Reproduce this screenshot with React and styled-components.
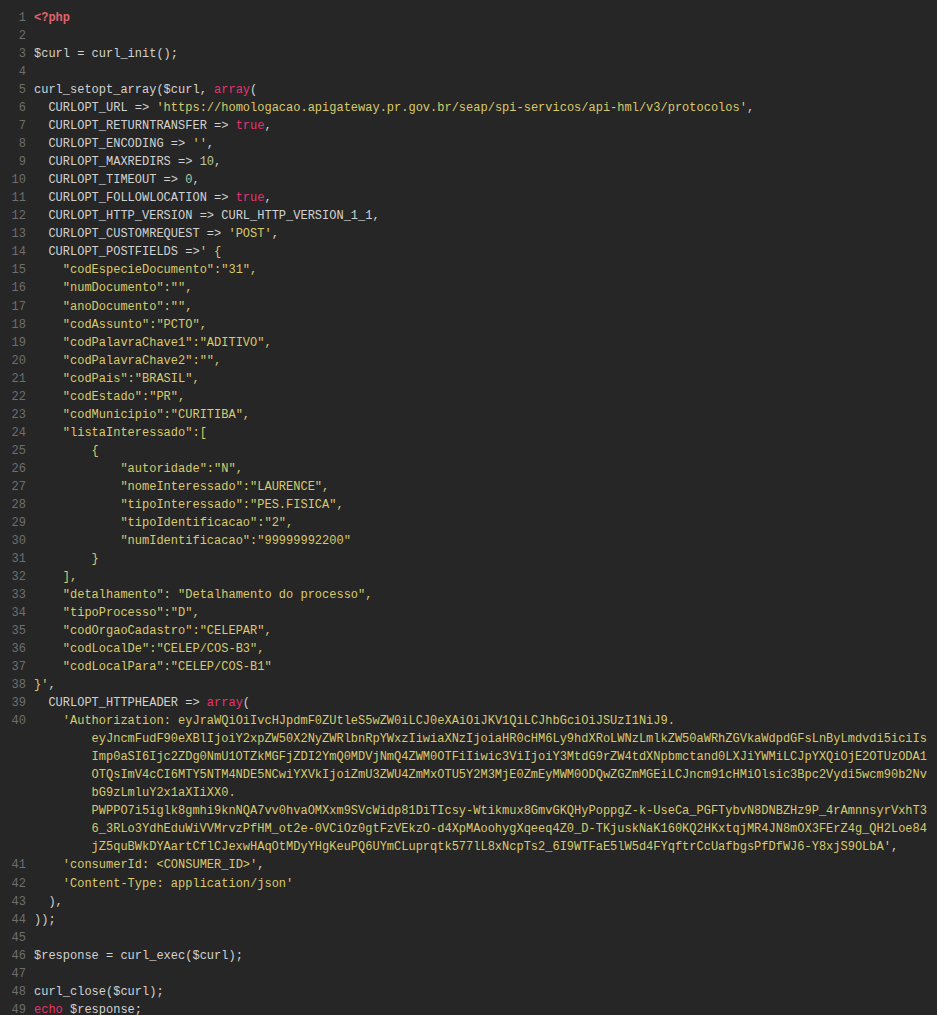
import React from "react";
import styled, { createGlobalStyle } from "styled-components";

const Global = createGlobalStyle`
  html, body {
    margin: 0;
    padding: 0;
    background: #262626;
  }
`;

const Editor = styled.div`
  display: grid;
  grid-template-columns: 26px 1fr;
  column-gap: 8px;
  padding: 9px 0 0 0;
  background: #262626;
  font-family: "Liberation Mono", "DejaVu Sans Mono", monospace;
  font-size: 12px;
  line-height: 18.03px;
  color: #d2d2d2;
  min-height: 1015px;
  box-sizing: border-box;
`;

const LineNo = styled.div`
  text-align: right;
  color: #6e6e6e;
  white-space: pre;
`;

const Code = styled.div`
  white-space: pre;
  min-height: 18px;
`;

const Wrap = styled.div`
  white-space: pre;
  padding-left: 57.6px;
`;

const colors = {
  d: "#d2d2d2",
  s: "#d9ca6c",
  k: "#e5336f",
  n: "#b3c9a2",
  t: "#e0626c",
};

const Tok = styled.span`
  color: ${(p) => colors[p.$t]};
  font-weight: ${(p) => (p.$t === "t" ? 700 : 400)};
`;

const S = (t) => ["s", t];
const D = (t) => ["d", t];
const K = (t) => ["k", t];
const N = (t) => ["n", t];

const lines = [
  [["t", "<?php"]],
  [],
  [D("$curl = curl_init();")],
  [],
  [D("curl_setopt_array($curl, "), K("array"), D("(")],
  [D("  CURLOPT_URL => "), S("'https://homologacao.apigateway.pr.gov.br/seap/spi-servicos/api-hml/v3/protocolos'"), D(",")],
  [D("  CURLOPT_RETURNTRANSFER => "), K("true"), D(",")],
  [D("  CURLOPT_ENCODING => "), S("''"), D(",")],
  [D("  CURLOPT_MAXREDIRS => "), N("10"), D(",")],
  [D("  CURLOPT_TIMEOUT => "), N("0"), D(",")],
  [D("  CURLOPT_FOLLOWLOCATION => "), K("true"), D(",")],
  [D("  CURLOPT_HTTP_VERSION => CURL_HTTP_VERSION_1_1,")],
  [D("  CURLOPT_CUSTOMREQUEST => "), S("'POST'"), D(",")],
  [D("  CURLOPT_POSTFIELDS =>"), S("' {")],
  [S('    "codEspecieDocumento":"31",')],
  [S('    "numDocumento":"",')],
  [S('    "anoDocumento":"",')],
  [S('    "codAssunto":"PCTO",')],
  [S('    "codPalavraChave1":"ADITIVO",')],
  [S('    "codPalavraChave2":"",')],
  [S('    "codPais":"BRASIL",')],
  [S('    "codEstado":"PR",')],
  [S('    "codMunicipio":"CURITIBA",')],
  [S('    "listaInteressado":[')],
  [S("        {")],
  [S('            "autoridade":"N",')],
  [S('            "nomeInteressado":"LAURENCE",')],
  [S('            "tipoInteressado":"PES.FISICA",')],
  [S('            "tipoIdentificacao":"2",')],
  [S('            "numIdentificacao":"99999992200"')],
  [S("        }")],
  [S("    ],")],
  [S('    "detalhamento": "Detalhamento do processo",')],
  [S('    "tipoProcesso":"D",')],
  [S('    "codOrgaoCadastro":"CELEPAR",')],
  [S('    "codLocalDe":"CELEP/COS-B3",')],
  [S('    "codLocalPara":"CELEP/COS-B1"')],
  [S("}'"), D(",")],
  [D("  CURLOPT_HTTPHEADER => "), K("array"), D("(")],
  {
    first: [D("    "), S("'Authorization: eyJraWQiOiIvcHJpdmF0ZUtleS5wZW0iLCJ0eXAiOiJKV1QiLCJhbGciOiJSUzI1NiJ9.")],
    wraps: [
      [S("eyJncmFudF90eXBlIjoiY2xpZW50X2NyZWRlbnRpYWxzIiwiaXNzIjoiaHR0cHM6Ly9hdXRoLWNzLmlkZW50aWRhZGVkaWdpdGFsLnByLmdvdi5iciIs")],
      [S("Imp0aSI6Ijc2ZDg0NmU1OTZkMGFjZDI2YmQ0MDVjNmQ4ZWM0OTFiIiwic3ViIjoiY3MtdG9rZW4tdXNpbmctand0LXJiYWMiLCJpYXQiOjE2OTUzODA1")],
      [S("OTQsImV4cCI6MTY5NTM4NDE5NCwiYXVkIjoiZmU3ZWU4ZmMxOTU5Y2M3MjE0ZmEyMWM0ODQwZGZmMGEiLCJncm91cHMiOlsic3Bpc2Vydi5wcm90b2Nv")],
      [S("bG9zLmluY2x1aXIiXX0.")],
      [S("PWPPO7i5iglk8gmhi9knNQA7vv0hvaOMXxm9SVcWidp81DiTIcsy-Wtikmux8GmvGKQHyPoppgZ-k-UseCa_PGFTybvN8DNBZHz9P_4rAmnnsyrVxhT3")],
      [S("6_3RLo3YdhEduWiVVMrvzPfHM_ot2e-0VCiOz0gtFzVEkzO-d4XpMAoohygXqeeq4Z0_D-TKjuskNaK160KQ2HKxtqjMR4JN8mOX3FErZ4g_QH2Loe84")],
      [S("jZ5quBWkDYAartCflCJexwHAqOtMDyYHgKeuPQ6UYmCLuprqtk577lL8xNcpTs2_6I9WTFaE5lW5d4FYqftrCcUafbgsPfDfWJ6-Y8xjS9OLbA'"), D(",")],
    ],
  },
  [D("    "), S("'consumerId: <CONSUMER_ID>'"), D(",")],
  [D("    "), S("'Content-Type: application/json'")],
  [D("  ),")],
  [D("));")],
  [],
  [D("$response = curl_exec($curl);")],
  [],
  [D("curl_close($curl);")],
  [K("echo"), D(" $response;")],
];

const Tokens = ({ toks }) =>
  toks.map(([t, text], i) => (
    <Tok key={i} $t={t}>
      {text}
    </Tok>
  ));

export default function App() {
  return (
    <>
      <Global />
      <Editor>
        {lines.map((line, i) => (
          <React.Fragment key={i}>
            <LineNo>{i + 1}</LineNo>
            {Array.isArray(line) ? (
              <Code>
                <Tokens toks={line} />
              </Code>
            ) : (
              <Code>
                <div>
                  <Tokens toks={line.first} />
                </div>
                {line.wraps.map((w, j) => (
                  <Wrap key={j}>
                    <Tokens toks={w} />
                  </Wrap>
                ))}
              </Code>
            )}
          </React.Fragment>
        ))}
      </Editor>
    </>
  );
}
